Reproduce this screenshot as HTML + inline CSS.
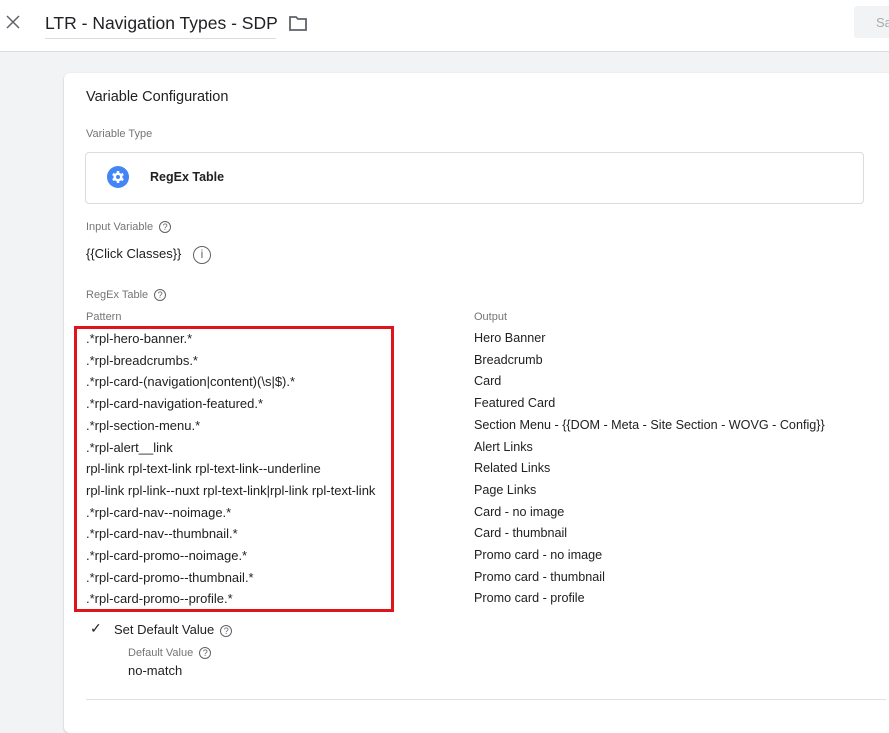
<!DOCTYPE html>
<html><head><meta charset="utf-8"><style>
*{margin:0;padding:0;box-sizing:border-box}
body{width:889px;height:714px;overflow:hidden;background:#f1f3f4;font-family:"Liberation Sans",Arial,sans-serif;position:relative;color:#202124}
.a{position:absolute;white-space:nowrap}
.hdr{position:absolute;left:0;top:0;width:889px;height:52px;background:#fff;border-bottom:1px solid #dadce0}
.card{position:absolute;left:64px;top:73px;width:840px;height:660px;background:#fff;border-radius:6px;box-shadow:0 1px 2px rgba(0,0,0,.2)}
.lbl{font-size:11px;color:#757575}
.t{font-size:13px;color:#202124}
.q{display:inline-block;width:12px;height:12px;border:1.3px solid #5f6368;border-radius:50%;font-size:9px;line-height:10px;text-align:center;color:#5f6368;vertical-align:middle;margin-left:6px}
</style></head><body>
<div class="hdr"></div>
<svg class="a" style="left:6px;top:15px" width="14" height="14" viewBox="0 0 14 14"><path d="M1 1l12 12M13 1L1 13" stroke="#5f6368" stroke-width="1.5"/></svg>
<div class="a" style="left:45px;top:13px;font-size:17.5px;color:#202124">LTR - Navigation Types - SDP</div>
<div class="a" style="left:45px;top:38px;width:231px;height:1px;background:#dadce0"></div>
<svg class="a" style="left:288px;top:14px" width="20" height="18" viewBox="0 0 20 18"><path d="M2 3h6l2 2h8v11H2z" fill="none" stroke="#5f6368" stroke-width="1.8"/></svg>
<div class="a" style="left:854px;top:6px;width:40px;height:32px;background:#f1f3f4;border-radius:3px;font-size:13px;color:#aaa;padding:9px 0 0 22px">Sa</div>
<div class="card"></div>
<div class="a" style="left:86px;top:89px;font-size:14.5px;color:#202124">Variable Configuration</div>
<div class="a lbl" style="left:86px;top:128px">Variable Type</div>
<div class="a" style="left:85px;top:152px;width:779px;height:52px;border:1px solid #dadce0;border-radius:4px"></div>
<svg class="a" style="left:107px;top:166px" width="22" height="22" viewBox="0 0 22 22"><circle cx="11" cy="11" r="11" fill="#4285f4"/><circle cx="11" cy="11" r="4.5" fill="#fff"/><g stroke="#fff" stroke-width="2.5"><path d="M11 5v12M5.8 8l10.4 6M5.8 14l10.4-6"/></g><circle cx="11" cy="11" r="2" fill="#4285f4"/></svg>
<div class="a" style="left:150px;top:170px;font-size:12.5px;font-weight:bold;color:#202124">RegEx Table</div>
<div class="a lbl" style="left:86px;top:221px">Input Variable<span class="q">?</span></div>
<div class="a t" style="left:86px;top:246px">{{Click Classes}}</div>
<div class="a" style="left:193px;top:246px;width:18px;height:18px;border:1.5px solid #5f6368;border-radius:50%;font-size:12px;text-align:center;line-height:15px;color:#5f6368">i</div>
<div class="a lbl" style="left:86px;top:289px">RegEx Table<span class="q">?</span></div>
<div class="a lbl" style="left:86px;top:311px">Pattern</div>
<div class="a lbl" style="left:474px;top:311px">Output</div>
<div class="a" style="left:74px;top:326px;width:320px;height:286px;border:3px solid #e0141b"></div>
<div class="a t" style="left:86px;top:328px;line-height:21.7px">.*rpl-hero-banner.*<br>.*rpl-breadcrumbs.*<br>.*rpl-card-(navigation|content)(\s|$).*<br>.*rpl-card-navigation-featured.*<br>.*rpl-section-menu.*<br>.*rpl-alert__link<br>rpl-link rpl-text-link rpl-text-link--underline<br>rpl-link rpl-link--nuxt rpl-text-link|rpl-link rpl-text-link<br>.*rpl-card-nav--noimage.*<br>.*rpl-card-nav--thumbnail.*<br>.*rpl-card-promo--noimage.*<br>.*rpl-card-promo--thumbnail.*<br>.*rpl-card-promo--profile.*</div>
<div class="a t" style="left:474px;top:328px;line-height:21.7px;font-size:12.6px">Hero Banner<br>Breadcrumb<br>Card<br>Featured Card<br>Section Menu - {{DOM - Meta - Site Section - WOVG - Config}}<br>Alert Links<br>Related Links<br>Page Links<br>Card - no image<br>Card - thumbnail<br>Promo card - no image<br>Promo card - thumbnail<br>Promo card - profile</div>
<div class="a" style="left:90px;top:620px;font-size:14px;color:#202124">✓</div>
<div class="a t" style="left:114px;top:622px">Set Default Value<span class="q">?</span></div>
<div class="a lbl" style="left:128px;top:647px">Default Value<span class="q">?</span></div>
<div class="a t" style="left:128px;top:663px">no-match</div>
<div class="a" style="left:86px;top:699px;width:800px;height:1px;background:#e0e0e0"></div>
</body></html>
